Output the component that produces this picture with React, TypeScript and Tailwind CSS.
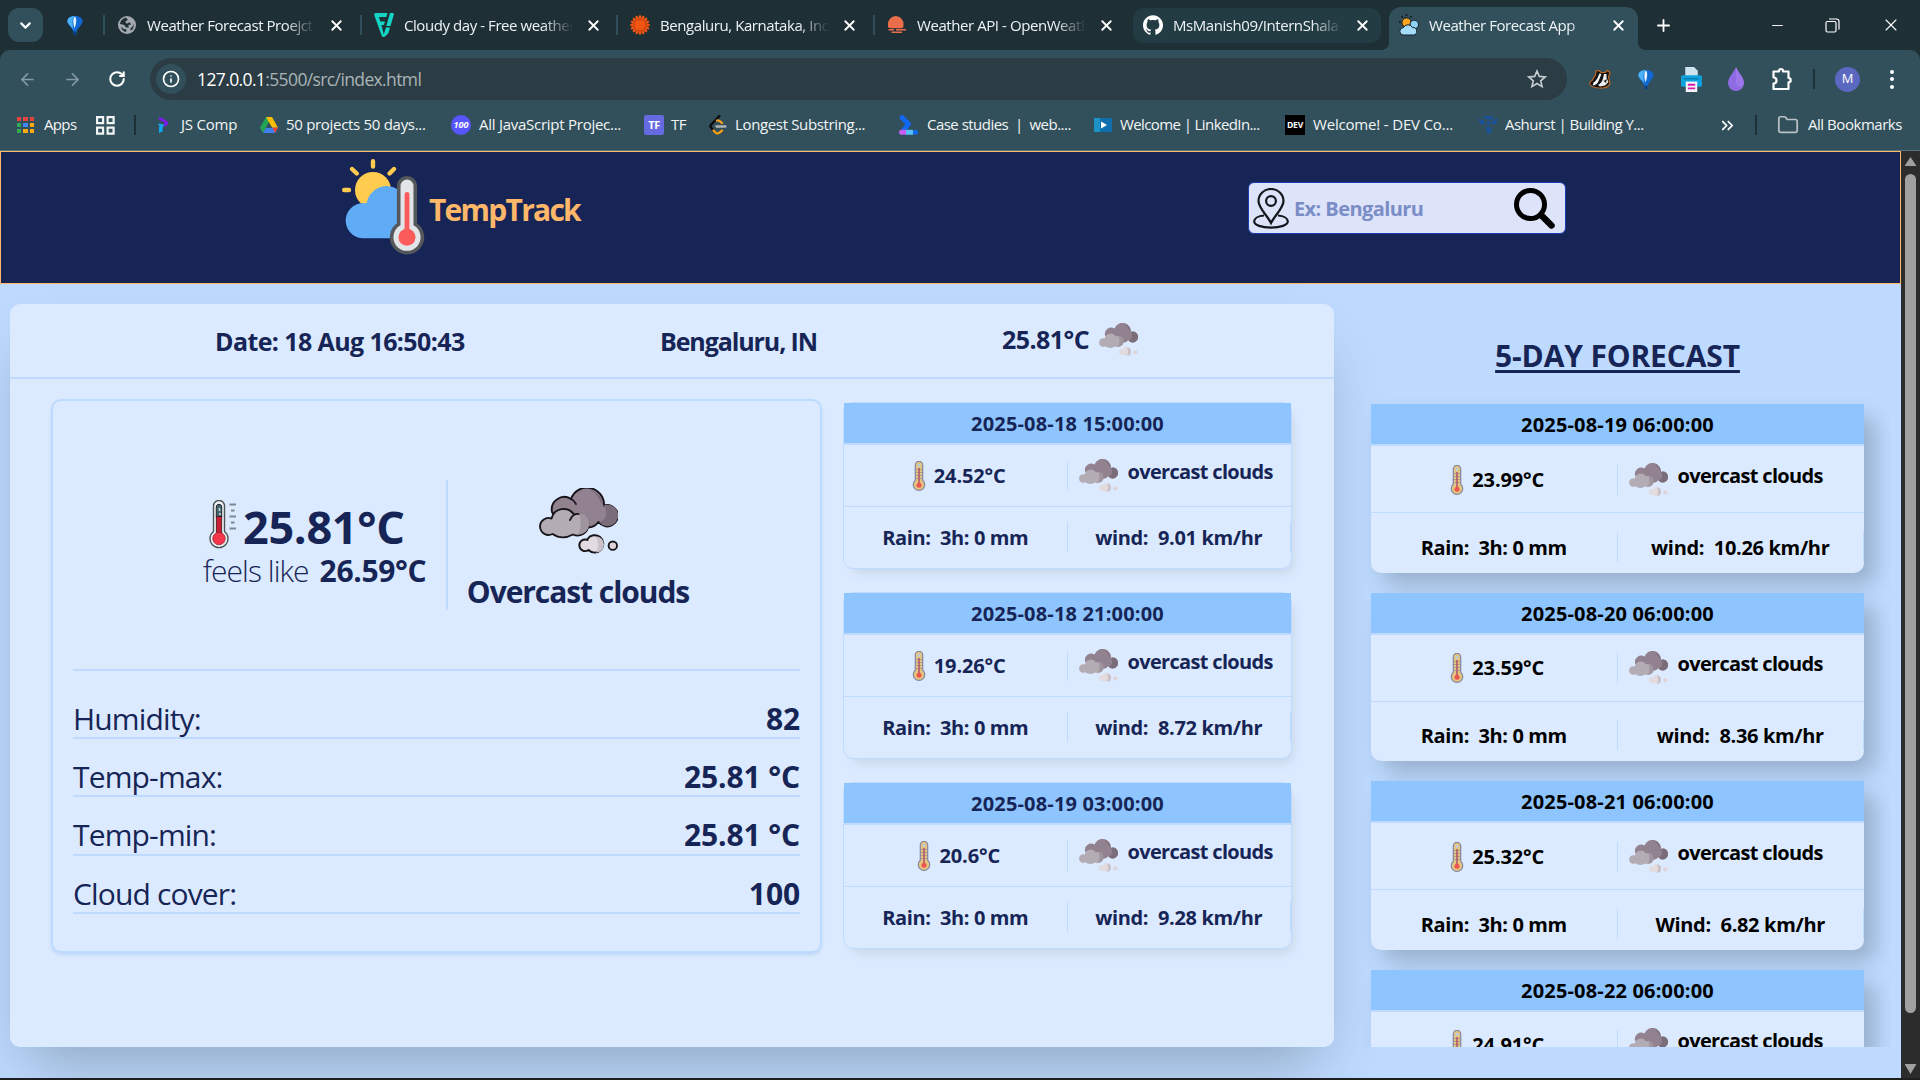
import type { ReactNode } from "react";
import { ArrowLeft, ArrowRight, ChevronDown, ChevronsRight, Folder, Info, Minus, Plus, RotateCw, X } from "lucide-react";
import { SiGithub } from "react-icons/si";

/* ---------- Weather drawings ---------- */

function Clouds({ className, outline = false }: { className: string; outline?: boolean }) {
  const stroke = outline ? "#17141a" : "none";
  return (
    <svg viewBox="0 0 80 67" preserveAspectRatio="none" className={className} fill="none">
      <g stroke={stroke} strokeWidth="1.9" strokeLinejoin="round" strokeLinecap="round">
        <path d="M14 24 A12.5 12.5 0 0 1 33 11 A17 17 0 0 1 66 17.500 A10.700 10.700 0 1 1 60.500 34 Q56 40 49 39.500 L20 34 Z" fill="#92828f" />
        <path d="M52 2 A17 17 0 0 1 65.200 17.600 A10.700 10.700 0 1 1 61 34 Q71 32 67 19 Q62 14 60 9 Q57 4 52 2 Z" fill="#7b6c7a" stroke="none" />
        <path d="M33 11 Q36.500 12.500 38 16" />
        <path d="M13.500 30.500 A12.500 12.500 0 0 1 36 26.500 A10.800 10.800 0 1 1 35 46.500 Q24 52.500 14.500 46 A8.500 8.500 0 1 1 13.500 30.500 Z" fill="#b4acb5" />
        <path d="M41 25 A10.500 10.500 0 0 1 40 46.500 Q45 37 41 25 Z" fill="#9f959f" stroke="none" />
        <path d="M36.500 26.500 Q33 28.500 32 32" />
        <path d="M49.500 51 A8.700 8.700 0 1 1 50.500 62 A5.800 5.800 0 1 1 49.500 52 Z" fill="#e2dbe0" />
        <path d="M58 48.500 A8 8 0 0 1 58 64.500 Q62 57 58 48.500 Z" fill="#cbc1c9" stroke="none" />
        <circle cx="74.800" cy="57.700" r="4.200" fill="#ddd3d8" />
      </g>
    </svg>
  );
}

function ScaleThermometer() {
  return (
    <svg viewBox="0 0 28 50" className="h-[50px] w-7" fill="none">
      <path d="M4.500 6 a5.500 5.500 0 0 1 11 0 V31.500 a9 9 0 1 1 -11 0 Z" fill="#eef1f3" stroke="#4b5357" strokeWidth="1.400" />
      <path d="M7.300 7 a2.700 2.700 0 0 1 5.400 0 V17 H7.300 Z" fill="#466672" stroke="#20282c" strokeWidth="1" />
      <path d="M10.500 8 v3 M11 13 v2" stroke="#c5dbe2" strokeWidth="1.500" />
      <rect x="7.300" y="16.500" width="5.400" height="18" fill="#c91f35" stroke="#3b1a20" strokeWidth=".8" />
      <circle cx="10" cy="38.500" r="6.300" fill="#f5364a" stroke="#7a1a26" strokeWidth=".6" />
      <path d="M20.500 4.500 h6.500 M22 10.500 h3.500 M20.500 16.500 h6.500 M22 22.500 h3.500 M20.500 28.500 h6.500" stroke="#7c8794" strokeWidth="2.200" />
    </svg>
  );
}

function SmallThermometer() {
  return (
    <svg viewBox="0 0 14 30" className="h-[30px] w-3.5 shrink-0" fill="none">
      <path d="M3.300 4 a3.700 3.700 0 0 1 7.400 0 V19.300 a5.700 5.700 0 1 1 -7.400 0 Z" fill="#e3c67c" stroke="#8784a0" strokeWidth="1.200" />
      <path d="M4 8.500 h6 M4 11.500 h6 M4 14.500 h6 M4 17.500 h6" stroke="#a3979c" strokeWidth=".9" />
      <rect x="6.200" y="7" width="1.600" height="15" fill="#b5566c" />
      <circle cx="7" cy="4.500" r="1.400" fill="#b9cbe8" />
      <circle cx="7" cy="24.200" r="2.500" fill="#ee5352" />
    </svg>
  );
}

function Logo() {
  return (
    <svg viewBox="0 0 84 97" className="h-[97px] w-[84px]" fill="none">
      <circle cx="31" cy="31" r="18" fill="#ffcc4f" />
      <path d="M31 2.200 V7.500 M10 10 L14.800 14.500 M52 10 L47.500 14.500 M2.200 31 H7" stroke="#ffcc4f" strokeWidth="4.400" strokeLinecap="round" />
      <path d="M20.500 79.300 A17.700 17.700 0 1 1 24.500 44.200 A20.500 20.500 0 0 1 56 30.500 L58 79.300 Z" fill="#5fabf6" />
      <path d="M56.700 27 a8.300 8.300 0 0 1 16.600 0 V65.300 a15.400 15.400 0 1 1 -16.600 0 Z" fill="#e1e5e8" stroke="#54585b" strokeWidth="3.600" />
      <path d="M65 35.500 V75" stroke="#fb5b5b" strokeWidth="4.800" strokeLinecap="round" />
      <circle cx="65" cy="78.300" r="8.500" fill="#fb5b5b" />
    </svg>
  );
}

/* ---------- Browser drawings ---------- */

function Balloon({ className }: { className: string }) {
  return (
    <svg viewBox="0 0 18 20" className={className}>
      <path d="M9 0 C14 0 17.500 2.500 17 6 C16.500 9 12 13 10.500 16.500 V20 H7.500 V16.500 C6 13 1.500 9 1 6 C.5 2.500 4 0 9 0 Z" fill="#1268d3" />
      <path d="M9 0 C6 1 5.500 8 7.800 15 C6 11 1.500 9 1 6 C.5 2.500 4 0 9 0 Z" fill="#4bb2f6" />
      <path d="M9 0.500 C6.500 2 6.800 8 8.500 13 C10.500 8 11 2 9 .5 Z" fill="#dff2ff" />
      <rect x="7.600" y="16.500" width="2.800" height="3.500" fill="#0b3c80" />
    </svg>
  );
}

function Globe() {
  return (
    <svg viewBox="0 0 20 20" className="size-[18px]">
      <circle cx="10" cy="10" r="10" fill="#a4a9af" />
      <path d="M9 2 C5 2.500 2.300 6 2.300 9 L7 10 L8.500 12.500 L12 13 L11.500 10 L14.500 9.500 L13 7 L9.500 8.500 L8 6 L11 4.500 Z" fill="#1e2f35" />
      <path d="M3 12 C4 15.500 6.500 17.500 9 17.800 L9.500 15 L6.500 14.500 Z M17.500 8 C18 12 16.500 15 14 16.500 L14 13.500 L16.500 11.500 Z" fill="#1e2f35" />
    </svg>
  );
}

function Freepik() {
  return (
    <svg viewBox="0 0 20 24" className="h-6 w-5" fill="#15d3c5">
      <path d="M1.500 0 H13.500 L12.300 4 H5 L6.300 8.500 H11 L9.900 12 H7.400 L10.500 24 H9 Q8 24 7.500 22.300 L.3 2.200 Q0 0 1.500 0 Z" />
      <path d="M16 0 H18.800 Q20.300 0 19.800 1.800 L16.500 13 H12.300 Z M12 14.500 H16 L14.500 20 L10.500 24 L9.600 22 Z" />
    </svg>
  );
}

function Accu() {
  const spokes = Array.from({ length: 16 }, (_, i) => i * 22.5);
  return (
    <svg viewBox="-10 -10 20 20" className="size-[20px]">
      <circle r="7.800" fill="#f05514" />
      {spokes.map((a) => (
        <rect key={a} x="-1.200" y="-9.800" width="2.400" height="3" rx="1" fill="#f05514" transform={`rotate(${a})`} />
      ))}
      <circle r="6" fill="none" stroke="#a83405" strokeWidth=".8" />
    </svg>
  );
}

function OpenWeather() {
  return (
    <svg viewBox="0 0 20 18" className="h-[18px] w-5" fill="#eb6e4b">
      <path d="M1 9 A7.800 8 0 1 1 16.500 9 Q17 11 15.500 12 H2 Q.5 11 1 9 Z" />
      <path d="M3.500 11.500 H15 M1.500 13.800 H7 M9 13.800 H19 M4.500 16.300 H15" stroke="#eb6e4b" strokeWidth="1.500" />
    </svg>
  );
}

function AppIcon() {
  return (
    <svg viewBox="0 0 20 22" className="h-[22px] w-5">
      <path d="M7.500 0 v2 M2.500 2 l1.300 1.500 M12.500 2 l-1 1.500 M0 8 h1.500" stroke="#151515" strokeWidth="1.500" />
      <circle cx="7.500" cy="8.500" r="4.600" fill="#ffa51f" stroke="#161616" strokeWidth="1" />
      <path d="M11 10 a4.300 4.300 0 1 1 6 4.500 L12 14 Z" fill="#8fd0f5" stroke="#15202a" strokeWidth="1" />
      <path d="M4.500 21 a3.700 3.700 0 0 1 0 -7.400 a5 5 0 0 1 9 0 a3.700 3.700 0 0 1 1 7.400 Z" fill="#a5dcf9" stroke="#15202a" strokeWidth="1" />
    </svg>
  );
}

function Badger() {
  return (
    <svg viewBox="0 0 22 20" className="h-5 w-[22px]">
      <path d="M1 15.500 Q0 13 3 11.500 L6.500 6 L7 2 L10 1.500 L12 3.500 L16 3.500 L18.500 1.500 L21 3.500 L19.500 8 L21 14 Q20 18 14 19 Q4 19.500 1 15.500 Z" fill="#141414" stroke="#c8691e" strokeWidth="1.100" />
      <path d="M2.500 14.500 Q6 13.500 8.500 9 L10.500 4.500 L12.500 5 L10 11 Q8.500 15.500 4.500 16.500 Z" fill="#f7f7f7" />
      <path d="M9 16 Q13 13.500 14 9.500 L15 5 L17.500 5 L17.500 9 L19.500 13 L16 16.500 L11 17.500 Z" fill="#efefef" />
      <path d="M14.500 12 L18 10 L17 14 Z" fill="#2a2a2a" />
      <circle cx="3" cy="14.500" r="1.300" fill="#0c0c0c" />
    </svg>
  );
}

function Printer() {
  return (
    <svg viewBox="0 0 20 24" className="h-[25px] w-[21px]">
      <path d="M4 0 H12.500 L16 3.500 V9 H4 Z" fill="#cfe3ef" />
      <rect x="0" y="8" width="20" height="11" rx="1.500" fill="#10a2dd" />
      <rect x="2.500" y="10.500" width="15" height="1.500" fill="#0780b4" />
      <rect x="4.500" y="14" width="11" height="10" fill="#f3f6f8" />
      <path d="M6.500 17 h7 M6.500 20.500 h7" stroke="#d81ca8" strokeWidth="1.800" />
    </svg>
  );
}

function Drop() {
  return (
    <svg viewBox="0 0 16 24" className="h-6 w-4">
      <path d="M8 0 C9.500 4.500 16 10 16 16 A8 8 0 0 1 0 16 C0 10 6.500 4.500 8 0 Z" fill="#8f6be3" />
      <path d="M8 0 C9.500 4.500 16 10 16 16 C15 21 9 21 8 16 Z" fill="#a884f2" opacity=".5" />
    </svg>
  );
}

function Puzzle() {
  return (
    <svg viewBox="0 0 22 24" className="h-6 w-[22px]" fill="none" stroke="#fff" strokeWidth="2.200" strokeLinejoin="round">
      <path d="M2.500 4.500 H8 V4 a2 2 0 0 1 4 0 V4.500 H17.500 V11 a2.200 2.200 0 0 1 0 4.400 V22 H2.500 V16.500 a3 3 0 0 0 0 -6 Z" />
    </svg>
  );
}

function Star() {
  return (
    <svg viewBox="0 0 20 20" className="size-5" fill="none" stroke="#c6ccd0" strokeWidth="1.600">
      <path d="M10 2 L12.300 7.400 L18.200 7.900 L13.700 11.800 L15.100 17.600 L10 14.500 L4.900 17.600 L6.300 11.800 L1.800 7.900 L7.700 7.400 Z" />
    </svg>
  );
}

const appColors = [
  "bg-[#e8453c]", "bg-[#e8453c]", "bg-[#e8453c]",
  "bg-[#34a853]", "bg-[#4285f4]", "bg-[#fbab10]",
  "bg-[#34a853]", "bg-[#fbab10]", "bg-[#fbab10]",
];

function AppsGrid() {
  return (
    <div className="grid grid-cols-3 gap-[2px]">
      {appColors.map((c, i) => (
        <span key={i} className={`size-[4.300px] ${c}`} />
      ))}
    </div>
  );
}

function FourSquares() {
  return (
    <svg viewBox="0 0 19 19" className="size-[19px]" fill="none" stroke="#f2f5f6" strokeWidth="2.200">
      <path d="M1.100 1.100 h6 v6 h-6 Z M11.600 1.100 h6 v6 h-6 Z M1.100 11.600 h6 v6 h-6 Z M11.600 11.600 h6 v6 h-6 Z" />
    </svg>
  );
}

function JsComp() {
  return (
    <svg viewBox="0 0 10 16" className="h-4 w-2.5">
      <path d="M1 0 L5 1.500 L10 5 L9.500 8 L5.500 10 L6 7 L7 5.500 L1 3 Z" fill="#7d1bf0" />
      <path d="M.5 6.500 L6 7.500 L4.500 11 V14.500 L1 16 V10 L2 9 L.5 8.500 Z" fill="#12a8f5" />
    </svg>
  );
}

function Drive() {
  return (
    <svg viewBox="0 0 18 16" className="h-4 w-[18px]">
      <path d="M6 0 H12 L3 16 L0 10.700 Z" fill="#21a453" />
      <path d="M6 0 H12 L18 10.700 H12 Z" fill="#fbbc04" />
      <path d="M6 10.700 H18 L15 16 H3 Z" fill="#4081ee" />
      <path d="M12.500 10.700 H18 L15 16 Z" fill="#ea4335" />
      <path d="M6 10.700 L9 5.500 L12 10.700 Z" fill="#32505b" />
    </svg>
  );
}

function Leet() {
  return (
    <svg viewBox="0 0 18 20" className="h-5 w-[18px]" fill="none" strokeWidth="2.300" strokeLinecap="round">
      <path d="M10.500 1 L2 9.700 Q.8 11 2 12.500 L4.500 15.500" stroke="#0a0a0a" />
      <path d="M8 5.500 Q10 5 13 8 M4.500 15.500 L6.500 17.500 Q9 20 13 15.500" stroke="#ffa116" />
      <path d="M7.500 11.500 H16.500" stroke="#b3b3b3" />
    </svg>
  );
}

function CaseStudies() {
  return (
    <svg viewBox="0 0 20 20" className="size-5" fill="none" strokeLinecap="round">
      <path d="M3 2.500 L9.500 9 L5 15" stroke="#1168f5" strokeWidth="4.800" strokeLinejoin="round" />
      <path d="M2.500 17.300 H6" stroke="#c65cf0" strokeWidth="5" />
      <path d="M7 17.300 H14" stroke="#52c1f7" strokeWidth="5" strokeLinecap="butt" />
      <circle cx="16.500" cy="17.300" r="2.500" fill="#1168f5" />
    </svg>
  );
}

function LinkedInLearning() {
  return (
    <svg viewBox="0 0 18 14" className="h-3.5 w-[18px]">
      <rect width="18" height="14" fill="#0f6fae" />
      <rect width="6" height="14" fill="#1d92c4" />
      <path d="M7 3.500 L13 7 L7 10.500 Z" fill="#fff" />
    </svg>
  );
}

function Ashurst() {
  return (
    <svg viewBox="0 0 20 18" className="h-[18px] w-5" fill="#1d5296">
      <path d="M4 0 L11 0 L16 1 L14 4 L8 3 Z M0 3 L6 4 L7 8 L3 9 Z M9 5 L13 5.500 L12 9 L8.500 8.500 Z M15 4 L20 2 L18 8 L13.500 9 Z M7 11 L13 11 L14 16 L9.500 18 Z" />
    </svg>
  );
}

function DiscBadge() {
  return (
    <span className="flex size-5 items-center justify-center rounded-full bg-[#5755fb] text-[9px] font-bold italic tracking-normal text-white">100</span>
  );
}

/* ---------- Browser chrome ---------- */

function TabSeparator() {
  return <span className="h-5 w-[2px] shrink-0 bg-[#32505b]" />;
}

function Tab({ icon, title, className = "" }: { icon: ReactNode; title: string; className?: string }) {
  return (
    <div className={`flex items-center ${className}`}>
      <span className="flex w-5 shrink-0 justify-center">{icon}</span>
      <span className="ml-2.5 w-[169px] overflow-hidden whitespace-nowrap text-[15px] leading-6 tracking-[-0.430px] text-[#eef3f5] [mask-image:linear-gradient(to_right,black_82%,transparent)]">
        {title}
      </span>
      <X className="ml-3 size-[17px] shrink-0 text-white" strokeWidth={2.6} />
    </div>
  );
}

function TabStrip() {
  return (
    <div className="flex h-[50px] items-center bg-[#1e2f35]">
      <span className="ml-2 flex h-[34px] w-[35px] items-center justify-center rounded-[11px] bg-[#32505b]">
        <ChevronDown className="size-[17px] text-white" strokeWidth={3} />
      </span>
      <Balloon className="ml-[23px] h-[19px] w-[18px]" />
      <div className="ml-[19px] flex items-center">
        <TabSeparator />
        <Tab className="w-[255px] pl-3" icon={<Globe />} title="Weather Forecast Proejct" />
        <TabSeparator />
        <Tab className="w-[254px] pl-3" icon={<Freepik />} title="Cloudy day - Free weather icons" />
        <TabSeparator />
        <Tab className="w-[255px] pl-3" icon={<Accu />} title="Bengaluru, Karnataka, India Weather" />
        <TabSeparator />
        <Tab className="w-[258px] pl-[12px]" icon={<OpenWeather />} title="Weather API - OpenWeatherMap" />
      </div>
      <Tab
        className="h-[35px] w-[248px] rounded-[11px] bg-[#233b43] pl-2.5"
        icon={<SiGithub className="size-5 text-white" />}
        title="MsManish09/InternShala-Tasks"
      />
      <div className="flex h-[43px] self-end">
        <span className="w-2 self-end bg-[#32505b] h-2 [mask-image:radial-gradient(circle_at_0_0,transparent_8px,black_8px)]" />
        <Tab className="w-[249px] rounded-t-[12px] bg-[#32505b] pb-[7px] pl-2.5" icon={<AppIcon />} title="Weather Forecast App" />
        <span className="w-2 self-end bg-[#32505b] h-2 [mask-image:radial-gradient(circle_at_100%_0,transparent_8px,black_8px)]" />
      </div>
      <Plus className="ml-[8px] size-[19px] text-white" strokeWidth={2.3} />
      <Minus className="ml-[96px] size-[17px] text-white" strokeWidth={1.3} />
      <svg viewBox="0 0 15 15" className="ml-[39px] size-[15px]" fill="none" stroke="#fff" strokeWidth="1.200">
        <rect x="1" y="3.500" width="10" height="10.500" rx="1.500" />
        <path d="M4 1 H11.500 Q14 1 14 3.500 V11.500" />
      </svg>
      <X className="ml-[41px] size-5 text-white" strokeWidth={1.3} />
    </div>
  );
}

function Toolbar() {
  return (
    <div className="flex h-[58px] items-center">
      <ArrowLeft className="ml-[18px] size-[19px] text-[#8398a0]" strokeWidth={2.2} />
      <ArrowRight className="ml-[26px] size-[19px] text-[#8398a0]" strokeWidth={2.2} />
      <RotateCw className="ml-[26px] size-[18px] text-white" strokeWidth={2.7} />
      <div className="ml-[24px] flex h-[42px] w-[1417px] items-center rounded-full bg-[#2b3c44]">
        <span className="ml-[6px] flex size-[30px] items-center justify-center rounded-full bg-[#32505b]">
          <Info className="size-[18px] text-white" strokeWidth={2.2} />
        </span>
        <span className="ml-[11px] text-[17.500px] tracking-[-0.620px] text-white">
          127.0.0.1<span className="text-[#aab4b8]">:5500/src/index.html</span>
        </span>
        <span className="ml-auto mr-5">
          <Star />
        </span>
      </div>
      <div className="ml-[22px] flex items-center">
        <Badger />
        <Balloon className="ml-[26px] h-[19px] w-[18px]" />
        <span className="ml-[26px]"><Printer /></span>
        <span className="ml-[26px]"><Drop /></span>
        <span className="ml-[27px]"><Puzzle /></span>
        <span className="ml-[20px] h-5 w-[2px] bg-[#1e2f35]" />
        <span className="ml-[20px] flex size-[25px] items-center justify-center rounded-full bg-[#5b68bf] text-[13px] text-white">M</span>
        <span className="ml-[30px] flex flex-col gap-[3.500px]">
          <span className="size-[4px] rounded-full bg-white" />
          <span className="size-[4px] rounded-full bg-white" />
          <span className="size-[4px] rounded-full bg-white" />
        </span>
      </div>
    </div>
  );
}

function Bookmark({ icon, label, className, gap }: { icon: ReactNode; label: string; className: string; gap: string }) {
  return (
    <div className={`flex shrink-0 items-center ${className}`}>
      {icon}
      <span className={`whitespace-pre pb-0.5 ${gap}`}>{label}</span>
    </div>
  );
}

function BookmarkBar() {
  return (
    <div className="flex h-[34px] items-center text-[15px] tracking-[-0.350px] text-[#f2f5f6]">
      <Bookmark className="w-[79px] pl-[17px]" gap="ml-2.5 tracking-[-0.600px]" icon={<AppsGrid />} label="Apps" />
      <span className="ml-[17px]"><FourSquares /></span>
      <span className="ml-[19px] h-5 w-[2px] bg-[#1e2f35]" />
      <Bookmark className="ml-[22px] w-[102px]" gap="ml-[13px] tracking-[-0.200px]" icon={<JsComp />} label="JS Comp" />
      <Bookmark className="w-[191px]" gap="ml-[8px] tracking-[-0.300px]" icon={<Drive />} label="50 projects 50 days..." />
      <Bookmark className="w-[193px]" gap="ml-[8px] tracking-[-0.260px]" icon={<DiscBadge />} label="All JavaScript Projec..." />
      <Bookmark
        className="w-[65px]"
        gap="ml-[7px] tracking-[-0.600px]"
        icon={<span className="flex size-5 items-center justify-center rounded-[2px] bg-[#666ae0] text-[11px] font-bold text-white">TF</span>}
        label="TF"
      />
      <Bookmark className="w-[190px]" gap="ml-[8px]" icon={<Leet />} label="Longest Substring..." />
      <Bookmark className="w-[195px]" gap="ml-[8px] tracking-[-0.520px]" icon={<CaseStudies />} label="Case studies  |  web...." />
      <Bookmark className="w-[191px]" gap="ml-[8px] tracking-[-0.600px]" icon={<LinkedInLearning />} label="Welcome | LinkedIn..." />
      <Bookmark
        className="w-[193px]"
        gap="ml-[8px] tracking-[-0.180px]"
        icon={<span className="flex size-5 items-center justify-center bg-black text-[8.500px] font-bold tracking-tight text-white">DEV</span>}
        label="Welcome! - DEV Co..."
      />
      <Bookmark className="w-[240px]" gap="ml-[7px] tracking-[-0.520px]" icon={<Ashurst />} label="Ashurst | Building Y..." />
      <ChevronsRight className="size-[19px] text-white" strokeWidth={2.2} />
      <span className="ml-[18px] h-5 w-[2px] bg-[#1e2f35]" />
      <Folder className="ml-[20px] size-[22px] text-[#b9c1c5]" strokeWidth={1.9} />
      <span className="ml-[9px] whitespace-nowrap pb-0.5 tracking-[-0.460px]">All Bookmarks</span>
    </div>
  );
}

/* ---------- Weather app ---------- */

function AppHeader() {
  return (
    <header className="flex h-[133px] shrink-0 items-start border border-orange-300 bg-blue-950">
      <div className="ml-[341px] mt-[7px] flex">
        <Logo />
        <span className="ml-[3px] mt-[34px] text-[30px] font-bold leading-[34px] tracking-[-1.750px] text-orange-300">TempTrack</span>
      </div>
      <div className="ml-auto mr-[334px] mt-[30px] flex h-[52px] w-[318px] items-center rounded-[6px] border border-blue-800 bg-[#dde3f9]">
        <svg viewBox="0 0 36 41" className="ml-1 h-[41px] w-9" fill="none" stroke="#14161c" strokeWidth="2.200">
          <path d="M18 35 C14 27 5.500 20 5.500 13 A12.500 12 0 0 1 30.500 13 C30.500 20 22 27 18 35 Z" />
          <circle cx="18" cy="13" r="4.900" />
          <path d="M11 27.500 C5 28 1.200 30.500 1.200 33.500 C1.200 37 8.500 39.600 18 39.600 C27.500 39.600 34.800 37 34.800 33.500 C34.800 30.500 31 28 25 27.500" />
        </svg>
        <span className="ml-[5px] pt-0.5 text-[20px] font-bold tracking-[-0.580px] text-[#7a8dc6]">Ex: Bengaluru</span>
        <svg viewBox="0 0 41 41" className="ml-auto mr-[10px] size-[41px]" fill="none" stroke="#000">
          <circle cx="16.500" cy="16.500" r="14" strokeWidth="5" />
          <path d="M27 27 L37.500 37.500" strokeWidth="6.500" strokeLinecap="round" />
        </svg>
      </div>
    </header>
  );
}

interface Slot {
  time: string;
  temp: string;
  wind: string;
  windLabel?: string;
}

const todaySlots: Slot[] = [
  { time: "2025-08-18 15:00:00", temp: "24.52°C", wind: "9.01 km/hr" },
  { time: "2025-08-18 21:00:00", temp: "19.26°C", wind: "8.72 km/hr" },
  { time: "2025-08-19 03:00:00", temp: "20.6°C", wind: "9.28 km/hr" },
];

const forecast: Slot[] = [
  { time: "2025-08-19 06:00:00", temp: "23.99°C", wind: "10.26 km/hr" },
  { time: "2025-08-20 06:00:00", temp: "23.59°C", wind: "8.36 km/hr" },
  { time: "2025-08-21 06:00:00", temp: "25.32°C", wind: "6.82 km/hr", windLabel: "Wind:" },
  { time: "2025-08-22 06:00:00", temp: "24.91°C", wind: "" , windLabel: "" },
];

function SlotCard({ slot, frame, rowOne, rowTwo, skyText }: { slot: Slot; frame: string; rowOne: string; rowTwo: string; skyText: string }) {
  return (
    <article className={`flex shrink-0 flex-col rounded-[10px] bg-blue-100 text-[20px] font-bold ${frame}`}>
      <h3 className="h-[42px] shrink-0 border-b-2 border-blue-200 bg-blue-300 text-center leading-[42px] tracking-[0.170px]">{slot.time}</h3>
      <div className={`grid shrink-0 grid-cols-2 border-b border-blue-200 ${rowOne}`}>
        <div className="flex h-[30px] items-center justify-center border-r border-blue-200 pl-[7px]">
          <SmallThermometer />
          <span className="ml-2 leading-8 tracking-[-0.130px]">{slot.temp}</span>
        </div>
        <div className="flex h-[30px] items-start pl-2.5">
          <Clouds className="-mt-[2px] h-[34px] w-10 shrink-0" />
          <span className={`ml-2.5 whitespace-nowrap tracking-[-0.670px] ${skyText}`}>overcast clouds</span>
        </div>
      </div>
      {slot.wind && (
        <div className={`grid grid-cols-2 ${rowTwo}`}>
          <div className="h-[30px] whitespace-pre border-r border-blue-200 text-center leading-8 tracking-[-0.400px]">{"Rain:  3h: 0 mm"}</div>
          <div className="h-[30px] whitespace-pre border-r border-blue-200 text-center leading-8 tracking-[-0.330px]">
            {`${slot.windLabel ?? "wind:"}  ${slot.wind}`}
          </div>
        </div>
      )}
    </article>
  );
}

const details = [
  ["Humidity:", "82"],
  ["Temp-max:", "25.81 °C"],
  ["Temp-min:", "25.81 °C"],
  ["Cloud cover:", "100"],
];

function CurrentPanel() {
  return (
    <section className="h-[554px] w-[771px] rounded-[10px] border-2 border-blue-200 px-5 shadow-[0_2px_3px_rgba(120,170,230,0.3)]">
      <div className="flex h-[270px] items-start border-b-2 border-blue-200 pt-[79px]">
        <div className="flex h-[130px] w-[375px] flex-col border-r-2 border-blue-200 pl-[130px] pt-5">
          <div className="flex h-[53px] pl-1.5">
            <ScaleThermometer />
            <span className="ml-1.5 whitespace-nowrap text-[45px] font-bold leading-[53px] tracking-[-0.300px]">25.81°C</span>
          </div>
          <div className="whitespace-nowrap text-[30px] leading-[36px]">
            <span className="font-light tracking-[-0.950px]">feels like</span>
            <span className="ml-[11px] font-bold tracking-[-0.350px]">26.59°C</span>
          </div>
        </div>
        <div className="flex w-[260px] flex-col items-center pt-2">
          <Clouds outline className="h-[67px] w-20" />
          <span className="mt-[17px] whitespace-nowrap text-[30px] font-bold leading-10 tracking-[-1.070px]">Overcast clouds</span>
        </div>
      </div>
      <dl className="flex flex-col gap-[17px] pt-[26.500px] text-[30px] leading-[41px]">
        {details.map(([label, value]) => (
          <div key={label} className="flex h-[41.400px] justify-between border-b-2 border-blue-200">
            <dt className="tracking-[-0.850px]">{label}</dt>
            <dd className="font-bold tracking-[-0.100px]">{value}</dd>
          </div>
        ))}
      </dl>
    </section>
  );
}

function WeatherCard() {
  return (
    <main className="h-[743px] w-[1324px] shrink-0 rounded-[10px] bg-blue-100 shadow-[0_31px_62px_-15px_rgba(0,0,0,0.25)]">
      <div className="flex h-[75px] items-start border-b-2 border-blue-200 pt-5 text-[25px] font-bold leading-[34px]">
        <span className="ml-[205px] w-[445px] tracking-[-0.600px]">Date: 18 Aug 16:50:43</span>
        <span className="w-[342px] tracking-[-1.100px]">Bengaluru, IN</span>
        <span className="-mt-[2px] tracking-[-0.550px]">25.81°C</span>
        <Clouds className="-mt-px ml-[9px] h-[34px] w-10" />
      </div>
      <div className="flex pl-[41px] pt-5">
        <CurrentPanel />
        <div className="ml-[21px] mt-[3px] flex flex-col gap-[23px]">
          {todaySlots.map((slot) => (
            <SlotCard
              key={slot.time}
              slot={slot}
              frame="h-[167px] w-[449px] border border-blue-200 shadow-[5px_8px_12px_-5px_rgba(0,0,0,0.1)]"
              rowOne="h-[62px] pt-4"
              rowTwo="pt-[15px]"
              skyText="leading-[22px]"
            />
          ))}
        </div>
      </div>
    </main>
  );
}

function ForecastColumn() {
  return (
    <aside className="flex h-[743px] w-[557px] shrink-0 flex-col items-center overflow-hidden pl-2.5 text-black">
      <h2 className="mt-[32px] h-[68.400px] shrink-0 text-[30px] font-bold leading-10 tracking-[-0.150px] text-blue-950 underline decoration-[3px] underline-offset-[3px]">
        5-DAY FORECAST
      </h2>
      <div className="flex flex-col gap-5">
        {forecast.map((slot) => (
          <SlotCard
            key={slot.time}
            slot={slot}
            frame="h-[168.500px] w-[493px] shadow-[12px_12px_22px_rgba(0,0,0,0.2)]"
            rowOne="h-[67px] pt-[18.600px]"
            rowTwo="pt-[18.600px]"
            skyText="leading-[21px]"
          />
        ))}
      </div>
    </aside>
  );
}

function Scrollbar() {
  return (
    <div className="flex h-[927px] w-[19px] shrink-0 flex-col items-center bg-[#2c2c2c]">
      <span className="mt-1.5 h-[9px] w-3 bg-[#a0a0a0] [clip-path:polygon(50%_0,100%_100%,0_100%)]" />
      <span className="mt-2 h-[839px] w-[11px] rounded-full bg-[#a0a0a0]" />
      <span className="mt-[51px] h-[10px] w-3 bg-[#a0a0a0] [clip-path:polygon(0_0,100%_0,50%_100%)]" />
    </div>
  );
}

export default function App() {
  return (
    <div className="flex h-[1080px] w-[1920px] flex-col overflow-hidden bg-[#1e1e1e] font-['Open_Sans',sans-serif]">
      <TabStrip />
      <div className="h-[101px] shrink-0 bg-[#1e2f35]">
        <div className="h-full rounded-t-[10px] border-b border-[#5a7680] bg-[#32505b]">
          <Toolbar />
          <BookmarkBar />
        </div>
      </div>
      <div className="flex h-[927px]">
        <div className="flex w-[1901px] flex-col overflow-hidden bg-blue-200 text-blue-950">
          <AppHeader />
          <div className="flex pl-2.5 pt-5">
            <WeatherCard />
            <ForecastColumn />
          </div>
        </div>
        <Scrollbar />
      </div>
    </div>
  );
}
